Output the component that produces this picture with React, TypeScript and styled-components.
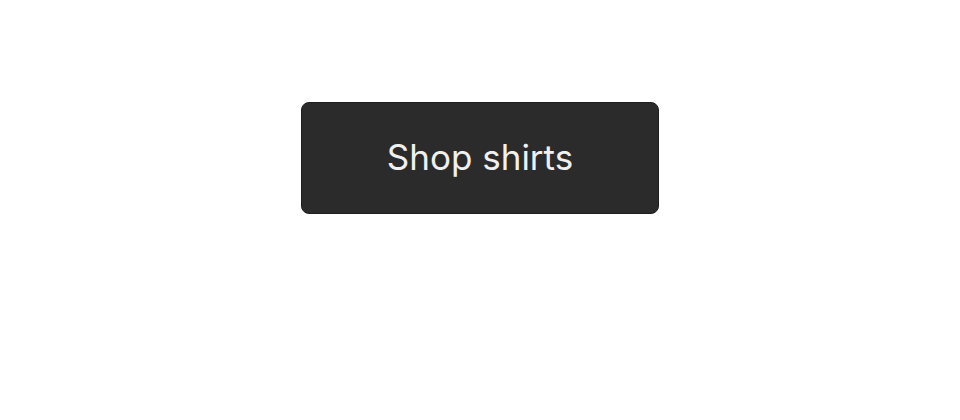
import React from "react";
import styled, { createGlobalStyle } from "styled-components";

const Global = createGlobalStyle`
  html, body { margin: 0; padding: 0; background: #ffffff; }
  body { width: 960px; height: 420px; overflow: hidden; }
`;

const Page = styled.main`
  width: 960px;
  height: 420px;
  display: flex;
  justify-content: center;
  align-items: flex-start;
  padding-top: 102px;
  box-sizing: border-box;
`;

const Button = styled.button`
  width: 358px;
  height: 112px;
  box-sizing: border-box;
  background: #2b2b2b;
  border: 1px solid #1e1e1e;
  border-radius: 8px;
  color: #f0f0f0;
  font-family: "Inter", "Liberation Sans", sans-serif;
  font-size: 35px;
  font-weight: 400;
  letter-spacing: 0;
  display: flex;
  align-items: center;
  justify-content: center;
  cursor: pointer;
  padding: 0 0 3px 0;
`;

export default function App() {
  return (
    <>
      <Global />
      <Page>
        <Button type="button">Shop shirts</Button>
      </Page>
    </>
  );
}
